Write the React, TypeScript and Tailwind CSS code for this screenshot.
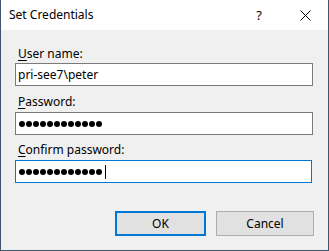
const DOTS = 12;

function Dots({ caret }: { caret?: boolean }) {
  return (
    <div className="flex items-center gap-[1px]">
      {Array.from({ length: DOTS }).map((_, i) => (
        <span key={i} className="block h-[6px] w-[6px] rounded-full bg-black" />
      ))}
      {caret && <span className="ml-[2px] block h-[14px] w-[1px] bg-black" />}
    </div>
  );
}

function Label({ u, rest, className }: { u: string; rest: string; className?: string }) {
  return (
    <div className={`pl-[3px] text-[12px] leading-[16px] text-black ${className ?? ""}`}>
      <span className="underline underline-offset-[2px]">{u}</span>
      {rest}
    </div>
  );
}

export default function App() {
  return (
    <div
      className="flex h-[251px] w-[329px] flex-col border-x border-b border-[#3b566d] bg-[#f0f0f0] text-black"
      style={{ fontFamily: '"Noto Sans", "Open Sans", sans-serif' }}
    >
      <div className="flex h-[30px] items-center bg-white pl-[8px] text-[12px] leading-[16px]">
        <span>Set Credentials</span>
        <div className="ml-auto flex h-full">
          <div className="flex w-[46px] items-center justify-center text-[13px]">?</div>
          <div className="flex w-[46px] items-center justify-center">
            <svg width="11" height="11" viewBox="0 0 11 11" fill="none" stroke="black" strokeWidth="1">
              <path d="M0.5 0.5 L10.5 10.5 M10.5 0.5 L0.5 10.5" />
            </svg>
          </div>
        </div>
      </div>

      <div className="flex flex-col pl-[14px] pr-[15px] pt-[16px]">
        <Label u="U" rest="ser name:" />
        <div className="mt-[1px] flex h-[23px] items-center border border-[#7a7a7a] bg-white pl-[2px] text-[12px]">
          pri-see7\peter
        </div>

        <Label u="P" rest="assword:" className="mt-[8px]" />
        <div className="mt-[2px] flex h-[23px] items-center border border-[#7a7a7a] bg-white pl-[3px]">
          <Dots />
        </div>

        <Label u="C" rest="onfirm password:" className="mt-[7px]" />
        <div className="mt-[2px] mr-[1px] flex h-[23px] items-center border border-[#0078d7] bg-white pl-[3px]">
          <Dots caret />
        </div>

        <div className="mt-[28px] flex justify-end gap-[10px]">
          <button className="flex h-[25px] w-[91px] items-center justify-center border-2 border-[#0078d7] bg-[#e1e1e1] text-[12px]">
            OK
          </button>
          <button className="mr-[-1px] flex h-[25px] w-[98px] items-center justify-center border border-[#adadad] bg-[#e1e1e1] text-[12px]">
            Cancel
          </button>
        </div>
      </div>
    </div>
  );
}
